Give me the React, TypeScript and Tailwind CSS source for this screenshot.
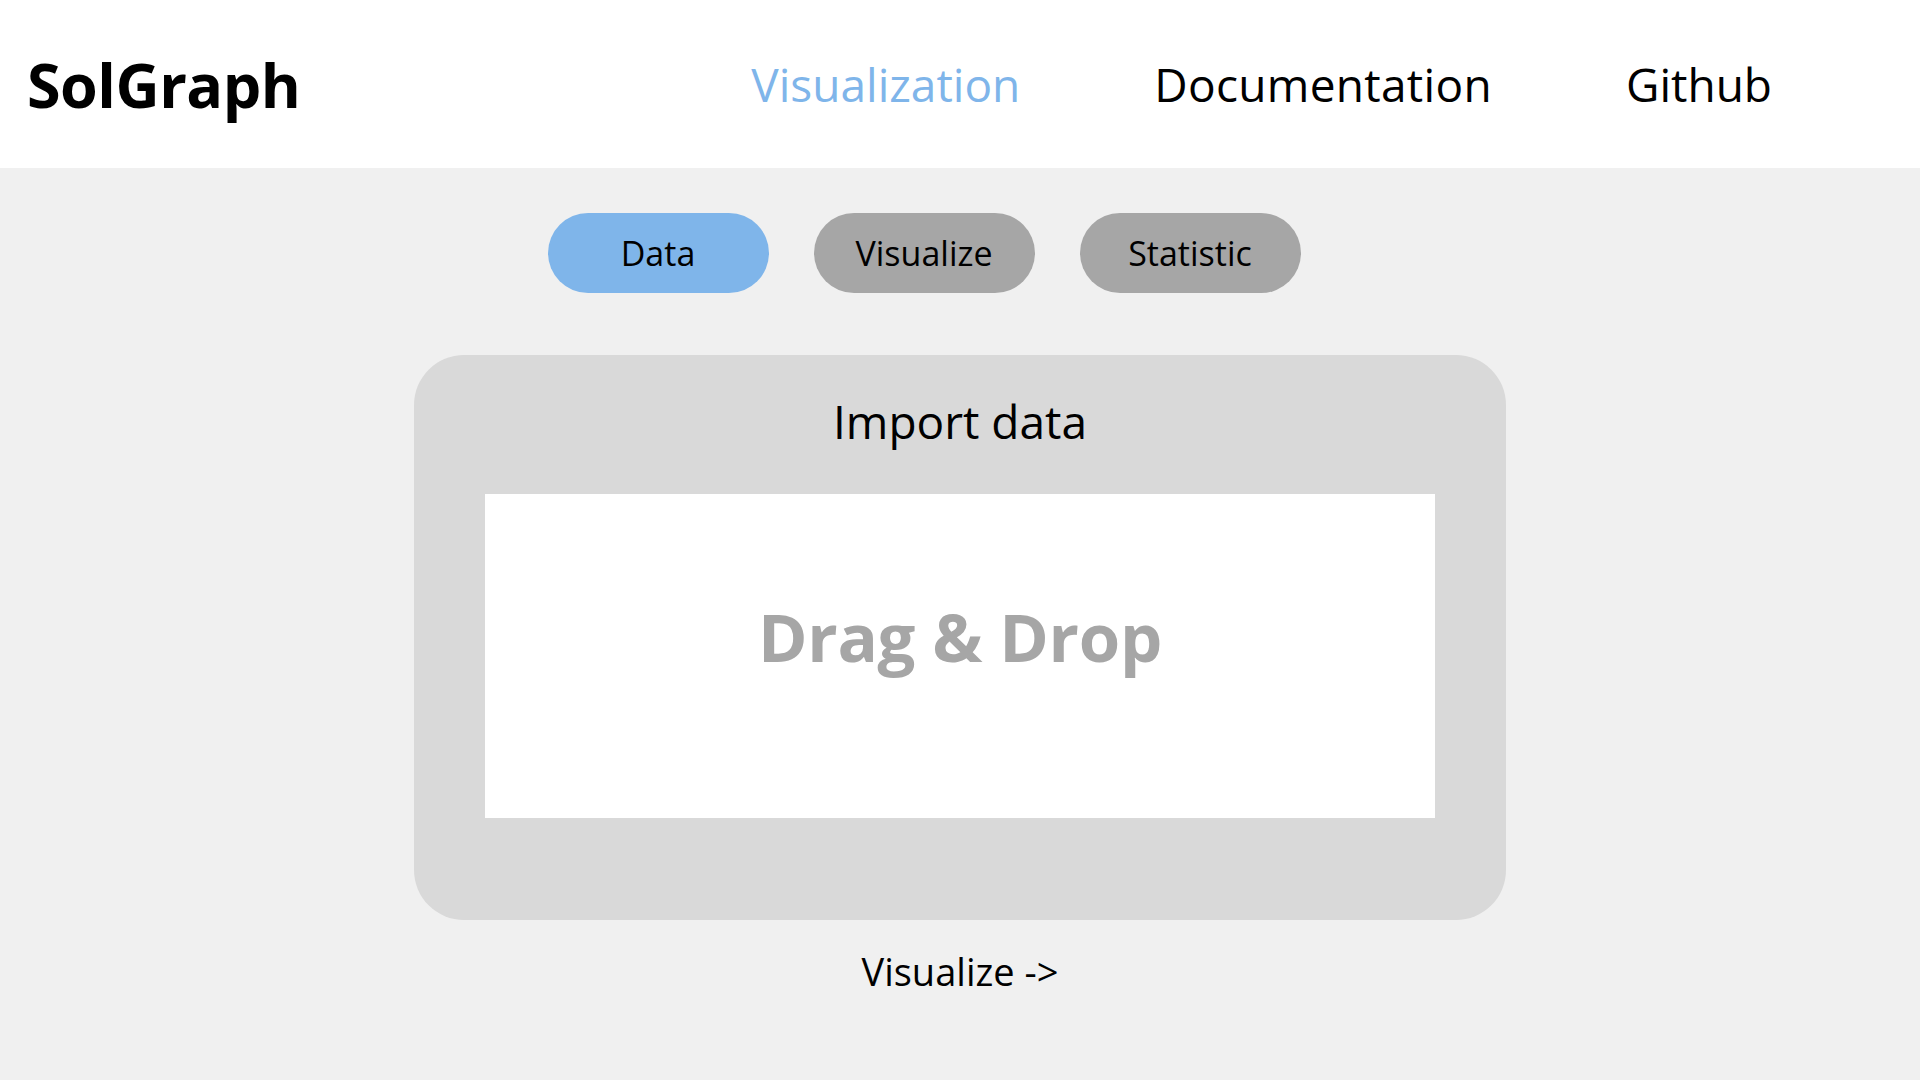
export default function App() {
  const tabs = ['Data', 'Visualize', 'Statistic']

  return (
    <div className="min-h-screen bg-[#f0f0f0] text-black" style={{ fontFamily: '"Open Sans", "Noto Sans", sans-serif' }}>
      {/* header */}
      <header className="h-[168px] bg-white flex items-center pl-[27px] pr-[148px]">
        <div className="text-[61px] font-bold leading-none tracking-[-0.5px]">SolGraph</div>
        <div className="flex-1" />
        <nav className="flex items-center gap-[134px] text-[46px] leading-none">
          <a className="text-[#7fb5ea]">Visualization</a>
          <a className="tracking-[0.3px]">Documentation</a>
          <a>Github</a>
        </nav>
      </header>

      <main className="flex flex-col items-center">
        {/* tabs row sits a bit left of centre */}
        <div className="flex gap-[45px] mt-[45px] mr-[72px]">
          {tabs.map((t, i) => (
            <button
              key={t}
              className={`w-[221px] h-[80px] rounded-full text-[34px] flex items-center justify-center ${
                i === 0 ? 'bg-[#7fb5ea]' : 'bg-[#a6a6a6]'
              }`}
            >
              {t}
            </button>
          ))}
        </div>

        <section className="mt-[62px] w-[1092px] bg-[#d9d9d9] rounded-[50px] px-[71px] pt-[36px] pb-[102px] flex flex-col items-center">
          <h2 className="text-[46px] leading-[61px]">Import data</h2>
          <div className="mt-[42px] w-full h-[324px] bg-white pt-[97px] flex justify-center">
            <span className="text-[67px] font-bold leading-[91px] text-[#a6a6a6] tracking-[-0.3px]">Drag &amp; Drop</span>
          </div>
        </section>

        <a className="mt-[25px] text-[38px] leading-[52px]">Visualize -&gt;</a>
      </main>
    </div>
  )
}
